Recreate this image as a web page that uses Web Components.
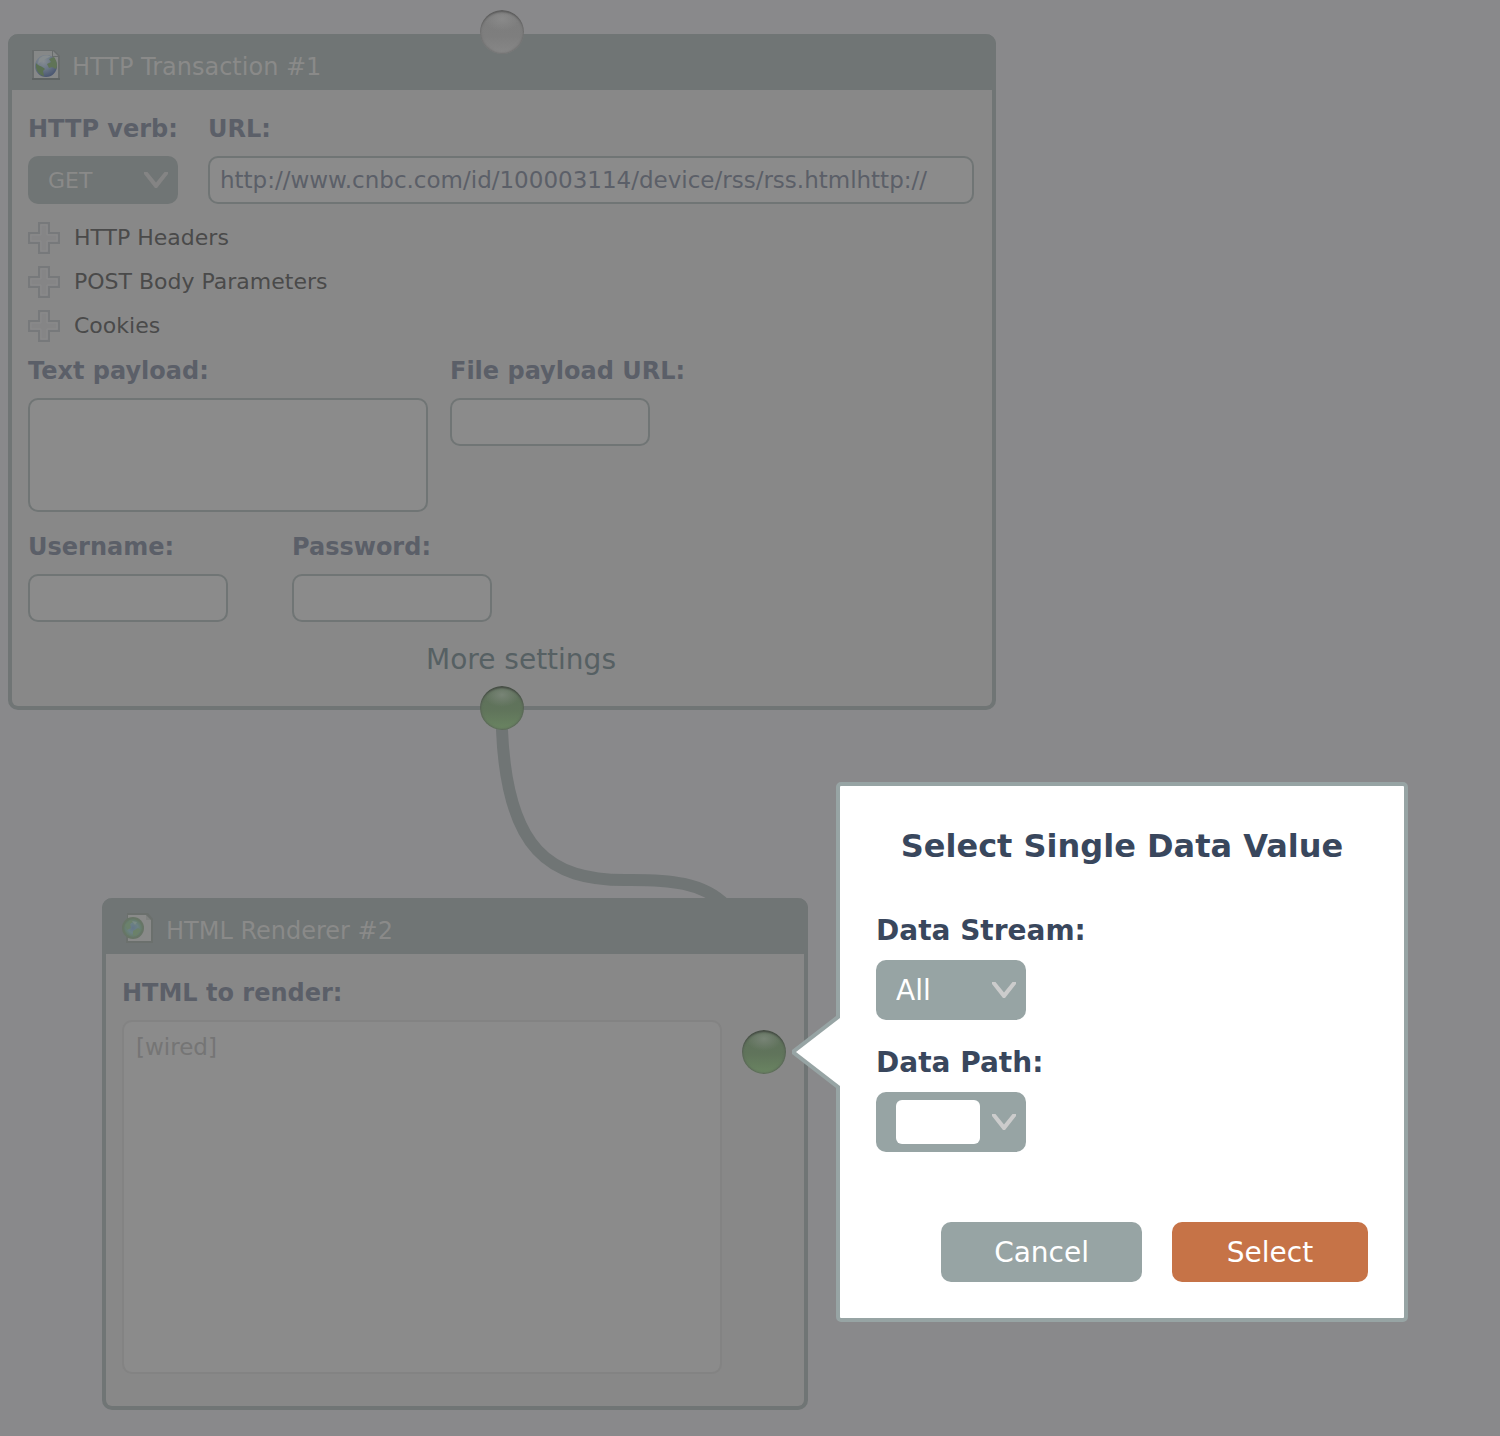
<!DOCTYPE html>
<html lang="en">
<head>
<meta charset="utf-8">
<meta name="viewport" content="width=device-width, initial-scale=1">
<title>Flow editor</title>
<style>
  body {
    --frame: #707575;
    --panel: #888888;
    --field: #8b8b8b;
    --label: #5b5f68;
    margin: 0;
    background: #89898b;
    font-family: "DejaVu Sans", Verdana, sans-serif;
  }
</style>
</head>
<body>

<flow-canvas>
  <flow-wire></flow-wire>

  <flow-node style="left: 8px; top: 34px; width: 988px" heading="HTTP Transaction #1" icon="http">
    <flow-row style="--gap: 30px">
      <flow-field kind="select" label="HTTP verb:" value="GET" style="width: 150px"></flow-field>
      <flow-field label="URL:" value="http://www.cnbc.com/id/100003114/device/rss/rss.htmlhttp://" style="flex: 1"></flow-field>
    </flow-row>
    <flow-list>
      <flow-toggle>HTTP Headers</flow-toggle>
      <flow-toggle>POST Body Parameters</flow-toggle>
      <flow-toggle>Cookies</flow-toggle>
    </flow-list>
    <flow-row style="--gap: 22px">
      <flow-field kind="textarea" label="Text payload:" style="width: 400px; --area-height: 114px"></flow-field>
      <flow-field label="File payload URL:" style="width: 200px"></flow-field>
    </flow-row>
    <flow-row style="--gap: 64px; margin-top: 18px">
      <flow-field label="Username:" style="width: 200px"></flow-field>
      <flow-field kind="password" label="Password:" style="width: 200px"></flow-field>
    </flow-row>
    <flow-more>More settings</flow-more>
    <flow-port slot="in" label="Input"></flow-port>
    <flow-port slot="out" wired label="Output"></flow-port>
  </flow-node>

  <flow-node style="left: 102px; top: 898px; width: 706px" heading="HTML Renderer #2" icon="html">
    <flow-row style="--gap: 20px">
      <flow-field kind="textarea" label="HTML to render:" value="[wired]" disabled
        style="width: 600px; --area-height: 354px; margin-bottom: 4px"></flow-field>
      <flow-port wired label="HTML input" style="margin-top: 54px"></flow-port>
    </flow-row>
  </flow-node>

  <data-dialog style="left: 836px; top: 782px" heading="Select Single Data Value">
    <flow-field kind="select" large label="Data Stream:" value="All" style="width: 150px"></flow-field>
    <flow-field kind="combo" large label="Data Path:" style="width: 150px"></flow-field>
  </data-dialog>
</flow-canvas>

<script>
// Attach an open shadow root and fill it
function render(el, html) {
  const root = el.attachShadow({ mode: 'open' });
  root.innerHTML = html;
  return root;
}

const icons = {
  // page with a globe in the middle
  http: `
    <svg width="32" height="32" viewBox="-2 0 32 32" aria-hidden="true">
      <defs>
        <radialGradient id="sea" cx="38%" cy="28%" r="75%">
          <stop offset="0" stop-color="#878d92"/>
          <stop offset=".5" stop-color="#6b7787"/>
          <stop offset="1" stop-color="#495570"/>
        </radialGradient>
      </defs>
      <path d="M2 1H24L30 7V31H2Z" fill="#696d6d"/>
      <path d="M4 2H22V8H28V29H4Z" fill="#868888"/>
      <path d="M23 2L28 7H23Z" fill="#858888"/>
      <path d="M2 29H30V31H2Z" fill="#5f6464"/>
      <circle cx="16" cy="17" r="11" fill="url(#sea)"/>
      <path d="M6 14C8 17 12 17 15 20L13 22L14 27C9 26 5 21 6 14Z" fill="#5a7053"/>
      <path d="M19 10L24 8C27 12 28 17 26 20L22 18L19 19L17 15L21 13Z" fill="#607457"/>
      <path d="M9 10C12 6 18 5 21 8C17 8 13 12 8 15Z" fill="#868c8e"/>
    </svg>`,
  // page with a small globe at the left edge
  html: `
    <svg width="32" height="32" viewBox="0 0 32 32" aria-hidden="true">
      <defs>
        <radialGradient id="sea" cx="50%" cy="50%" r="55%">
          <stop offset="0" stop-color="#647789"/>
          <stop offset=".5" stop-color="#6c8184"/>
          <stop offset="1" stop-color="#647a62"/>
        </radialGradient>
      </defs>
      <path d="M5 0H26L31 6V30H4V25L5 23Z" fill="#6b706d"/>
      <path d="M6 2H24V7H29V28H6Z" fill="#898a89"/>
      <path d="M24 2L29 7H24Z" fill="#808280"/>
      <circle cx="11" cy="15" r="11" fill="#677566"/>
      <circle cx="11" cy="15" r="9" fill="url(#sea)"/>
      <path d="M3 12L8 7L12 8L8 11L9 15L5 17Z" fill="#6b816b"/>
      <path d="M11 18L16 15L19 17L14 23L11 22Z" fill="#6b8169"/>
      <path d="M10 8L15 9L13 12Z" fill="#7b8b86"/>
    </svg>`
};

const chevron = `
  <svg class="chevron" width="24" height="16" viewBox="0 0 24 16" aria-hidden="true">
    <path d="M0 0H3.5L12 10.5L20.5 0H24V2L13 16H11L0 2Z" fill="currentColor"/>
  </svg>`;

class FlowCanvas extends HTMLElement {
  constructor() {
    super();
    render(this, `
      <style>
        :host {
          display: block;
          position: relative;
          min-height: 100vh;
          overflow: hidden;
        }
      </style>
      <slot></slot>
    `);
  }
}

class FlowWire extends HTMLElement {
  constructor() {
    super();
    render(this, `
      <style>
        :host {
          display: block;
          position: absolute;
          inset: 0;
          color: var(--frame);
        }
        svg {
          display: block;
          width: 100%;
          height: 100%;
        }
      </style>
      <svg aria-hidden="true">
        <path d="M502 708V730C507 850 550 880 625 880C715 879 758 892 764 1052"
          fill="none" stroke="currentColor" stroke-width="12"/>
      </svg>
    `);
  }
}

class FlowNode extends HTMLElement {
  connectedCallback() {
    if (this.shadowRoot) return;
    render(this, `
      <style>
        :host {
          display: block;
          position: absolute;
          box-sizing: border-box;
          border: 4px solid var(--frame);
          border-top: 0;
          border-radius: 10px;
          background: var(--panel);
        }
        header {
          display: flex;
          align-items: center;
          gap: 12px;
          box-sizing: border-box;
          height: 56px;
          margin: 0 -4px;
          padding: 6px 20px 0;
          border-radius: 10px 10px 0 0;
          background: var(--frame);
          color: #8a8a89;
        }
        h2 {
          margin: 0;
          padding-top: 4px;
          font-size: 24px;
          font-weight: normal;
          line-height: 32px;
        }
        section {
          padding: 22px 18px 28px 16px;
        }
        ::slotted([slot]) {
          position: absolute;
          left: calc(50% - 22px);
        }
        ::slotted([slot="in"]) {
          top: -24px;
        }
        ::slotted([slot="out"]) {
          bottom: -24px;
        }
      </style>
      <header>${icons[this.getAttribute('icon')]}<h2>${this.getAttribute('heading')}</h2></header>
      <section><slot></slot></section>
      <slot name="in"></slot>
      <slot name="out"></slot>
    `);
  }
}

class FlowRow extends HTMLElement {
  constructor() {
    super();
    render(this, `
      <style>
        :host {
          display: flex;
          align-items: flex-start;
          gap: var(--gap);
        }
      </style>
      <slot></slot>
    `);
  }
}

class FlowList extends HTMLElement {
  constructor() {
    super();
    render(this, `
      <style>
        :host {
          display: flex;
          flex-direction: column;
          gap: 12px;
          margin: 18px 0 12px;
        }
      </style>
      <slot></slot>
    `);
  }
}

class FlowToggle extends HTMLElement {
  constructor() {
    super();
    render(this, `
      <style>
        :host {
          display: block;
        }
        button {
          display: flex;
          align-items: center;
          gap: 14px;
          padding: 0;
          border: 0;
          background: none;
          color: #4a4a4a;
          font: 22px/32px "DejaVu Sans", Verdana, sans-serif;
          cursor: pointer;
        }
      </style>
      <button type="button" aria-expanded="false">
        <svg width="32" height="32" viewBox="0 0 32 32" aria-hidden="true">
          <path d="M11 1H21V11H31V21H21V31H11V21H1V11H11Z" fill="#858586" stroke="#77797b" stroke-width="2"/>
          <path d="M13 3H19V13H29V19H19V29H13V19H3V13H13Z" fill="none" stroke="#8a8a8b"/>
        </svg>
        <slot></slot>
      </button>
    `);
  }
}

class FlowMore extends HTMLElement {
  constructor() {
    super();
    render(this, `
      <style>
        :host {
          display: block;
          margin-top: 20px;
          padding-left: 40px;
          text-align: center;
          font-size: 28px;
          line-height: 36px;
        }
        a {
          color: #566063;
          text-decoration: none;
        }
      </style>
      <a href="#more"><slot></slot></a>
    `);
  }
}

class FlowPort extends HTMLElement {
  connectedCallback() {
    if (this.shadowRoot) return;
    render(this, `
      <style>
        :host {
          display: block;
          flex: none;
          width: 44px;
          height: 44px;
        }
        button {
          display: block;
          width: 44px;
          height: 44px;
          padding: 0;
          border: 0;
          border-radius: 50%;
          background:
            radial-gradient(ellipse 18px 12px at 50% 20%, #8a8a8a, transparent),
            linear-gradient(#7c7c7c, #7e7e7e 60%, #878787);
          box-shadow: inset 0 3px 2px -1px #5c5c5c, inset 0 0 2px 1px #707070;
        }
        :host([wired]) button {
          background:
            radial-gradient(ellipse 18px 12px at 50% 20%, #788476, transparent),
            linear-gradient(#5e6f5b, #60745b 55%, #6a8562);
          box-shadow: inset 0 3px 2px -1px #454c44, inset 0 0 2px 1px #5a6458;
        }
      </style>
      <button type="button" aria-label="${this.getAttribute('label')}"></button>
    `);
  }
}

class FlowField extends HTMLElement {
  connectedCallback() {
    if (this.shadowRoot) return;
    render(this, `
      <style>
        :host {
          --size: 24px;
          --line: 34px;
          --text: 22px;
          --height: 48px;
          --fill: var(--frame);
          --ink: #8a8a89;
          --arrow: #848484;
          display: block;
        }
        :host([large]) {
          --size: 28px;
          --line: 38px;
          --text: 28px;
          --height: 60px;
          --label: #39475d;
          --fill: #97a4a4;
          --ink: #ffffff;
          --arrow: #cccccc;
        }
        label {
          display: block;
          margin-bottom: 10px;
          color: var(--label);
          font-size: var(--size);
          font-weight: bold;
          line-height: var(--line);
          white-space: nowrap;
        }
        input, textarea, select {
          display: block;
          box-sizing: border-box;
          width: 100%;
          height: var(--height);
          margin: 0;
          padding: 0 10px;
          border: 2px solid var(--frame);
          border-radius: 10px;
          background: var(--field);
          color: var(--label);
          font-family: inherit;
          font-size: 23px;
          outline: none;
        }
        textarea {
          height: var(--area-height);
          padding: 12px;
          line-height: 26px;
          resize: none;
        }
        textarea:disabled {
          border-color: #838383;
          color: #757575;
        }
        .box {
          position: relative;
          height: var(--height);
          border-radius: 10px;
          background: var(--fill);
        }
        .box select {
          appearance: none;
          padding: 0 44px 0 20px;
          border: 0;
          background: none;
          color: var(--ink);
          font-size: var(--text);
        }
        .chevron {
          position: absolute;
          right: 10px;
          top: calc(50% - 8px);
          color: var(--arrow);
          pointer-events: none;
        }
        .combo {
          box-sizing: border-box;
          padding: 8px 46px 8px 20px;
        }
        .combo input {
          height: 44px;
          border: 0;
          border-radius: 6px;
          background: #ffffff;
        }
      </style>
      <label for="control">${this.getAttribute('label')}</label>
      ${this._control()}
    `);
  }

  _control() {
    const value = this.getAttribute('value') || '';
    const disabled = this.hasAttribute('disabled') ? 'disabled' : '';

    switch (this.getAttribute('kind')) {
      case 'select':
        return `<div class="box"><select id="control"><option>${value}</option></select>${chevron}</div>`;
      case 'combo':
        return `<div class="box combo"><input id="control" type="text">${chevron}</div>`;
      case 'textarea':
        return `<textarea id="control" ${disabled}>${value}</textarea>`;
      case 'password':
        return `<input id="control" type="password">`;
      default:
        return `<input id="control" type="text" value="${value}">`;
    }
  }
}

class DataDialog extends HTMLElement {
  connectedCallback() {
    if (this.shadowRoot) return;
    const root = render(this, `
      <style>
        :host {
          display: block;
          position: absolute;
          box-sizing: border-box;
          width: 572px;
          padding: 36px;
          border: 4px solid #97a4a4;
          border-radius: 5px;
          background: #ffffff;
        }
        h1 {
          margin: 0 0 42px;
          color: #39475d;
          font-size: 32px;
          line-height: 48px;
          text-align: center;
        }
        .fields {
          display: flex;
          flex-direction: column;
          gap: 24px;
        }
        footer {
          display: flex;
          justify-content: flex-end;
          gap: 30px;
          margin-top: 70px;
        }
        button {
          height: 60px;
          min-width: 196px;
          padding: 0 53px;
          border: 0;
          border-radius: 10px;
          background: #97a4a4;
          color: #ffffff;
          font-family: inherit;
          font-size: 28px;
          cursor: pointer;
        }
        #select {
          background: #c67347;
        }
        .pointer {
          position: absolute;
          left: -48px;
          top: 228px;
        }
      </style>
      <svg class="pointer" width="48" height="76" viewBox="0 0 48 76" aria-hidden="true">
        <path d="M44 2L0 36V40L44 74H48V2Z" fill="#97a4a4"/>
        <path d="M48 4L4 38L48 72Z" fill="#ffffff"/>
      </svg>
      <h1>${this.getAttribute('heading')}</h1>
      <div class="fields"><slot></slot></div>
      <footer>
        <button id="cancel" type="button">Cancel</button>
        <button id="select" type="button">Select</button>
      </footer>
    `);
    this.setAttribute('role', 'dialog');
    this.setAttribute('aria-label', this.getAttribute('heading'));
    root.querySelector('#cancel').addEventListener('click', this._close.bind(this));
    root.querySelector('#select').addEventListener('click', this._close.bind(this));
  }

  _close(event) {
    this.dispatchEvent(new Event(event.target.id, { bubbles: true, composed: true }));
    this.remove();
  }
}

customElements.define('flow-canvas', FlowCanvas);
customElements.define('flow-wire', FlowWire);
customElements.define('flow-node', FlowNode);
customElements.define('flow-row', FlowRow);
customElements.define('flow-list', FlowList);
customElements.define('flow-toggle', FlowToggle);
customElements.define('flow-more', FlowMore);
customElements.define('flow-port', FlowPort);
customElements.define('flow-field', FlowField);
customElements.define('data-dialog', DataDialog);
</script>
</body>
</html>
